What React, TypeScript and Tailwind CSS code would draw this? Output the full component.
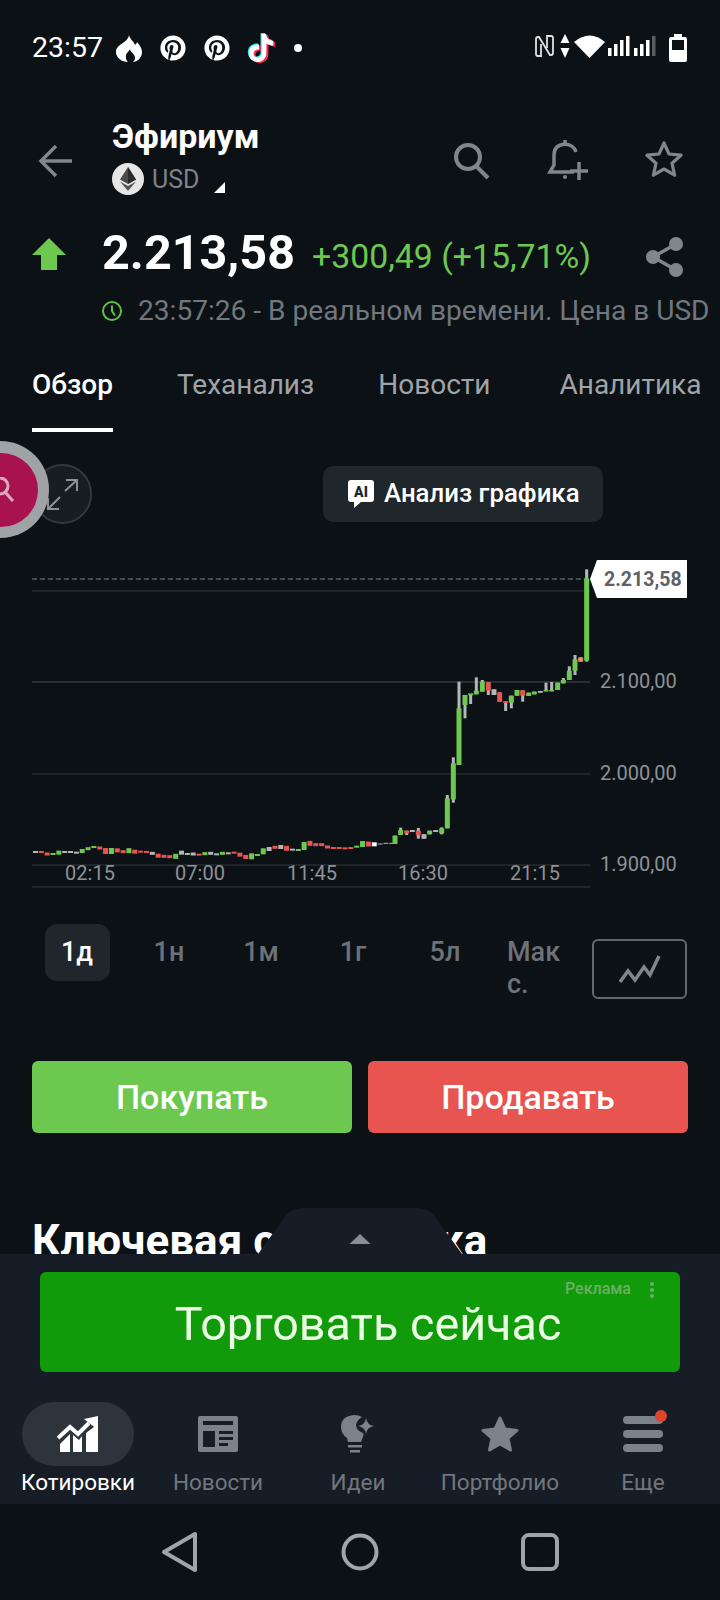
import { FaPinterest } from 'react-icons/fa';
import { SiTiktok } from 'react-icons/si';

const G = '#6cc84f';
const R = '#e8544f';
const W = '#b4b7b9';

// flat part of the chart: y in px * 3 above 780, colour, body height
const flat: [number, string, number][] = [
  [216, W, 2], [216, R, 2], [222, R, 3], [222, G, 2], [218, G, 4], [216, W, 2], [216, W, 2], [218, W, 2],
  [213, G, 4], [206, G, 3], [201, G, 2], [204, R, 3], [213, R, 6], [213, G, 6], [211, R, 4], [215, R, 3],
  [212, G, 5], [215, R, 4], [215, R, 2], [216, R, 2], [220, W, 3], [227, R, 4], [229, R, 3], [230, R, 3],
  [229, G, 5], [218, W, 4], [222, W, 2], [222, W, 3], [224, R, 2], [221, G, 3], [220, W, 3], [223, W, 2],
  [220, G, 3], [220, W, 2], [218, R, 2], [224, R, 4], [231, R, 4], [229, G, 6], [225, G, 2], [214, G, 6],
  [207, W, 4], [202, R, 3], [201, W, 4], [205, R, 5], [209, W, 2], [210, G, 2], [198, G, 8], [190, R, 5],
  [194, R, 3], [194, R, 3], [201, R, 3], [204, R, 2], [204, R, 2], [205, R, 2], [204, R, 2], [200, G, 2],
  [192, G, 6], [192, R, 5], [193, '#ffffff', 4], [192, W, 1], [190, W, 1], [190, W, 1],
];

// rally: x, body top, body bottom, wick top, wick bottom (zoom px, 360/550 origin)
const rally: [number, number, number, string, number, number][] = [
  [105, 857, 882, G, 857, 882], [122, 840, 855, G, 833, 855], [140, 842, 850, R, 842, 855], [157, 840, 846, W, 840, 846],
  [175, 842, 856, R, 834, 866], [192, 853, 866, W, 853, 866], [209, 842, 853, G, 842, 853], [227, 840, 846, W, 840, 846],
  [245, 835, 850, G, 832, 853], [262, 745, 835, G, 735, 835], [280, 640, 748, G, 622, 758], [297, 475, 645, G, 395, 645],
  [315, 435, 465, G, 435, 505], [332, 430, 436, G, 432, 462], [349, 422, 433, G, 382, 433], [367, 395, 425, G, 390, 425],
  [385, 397, 422, R, 397, 435], [402, 418, 435, W, 418, 435], [419, 427, 456, R, 427, 456], [437, 454, 459, R, 454, 483],
  [454, 437, 458, G, 437, 475], [471, 420, 437, G, 420, 437], [488, 421, 437, R, 421, 455], [506, 428, 438, G, 428, 438],
  [523, 425, 433, G, 425, 433], [541, 423, 428, W, 423, 428], [558, 420, 424, G, 398, 424], [575, 420, 424, G, 396, 424],
  [593, 398, 420, G, 398, 420], [610, 390, 400, G, 384, 400], [628, 362, 390, G, 349, 390], [645, 328, 362, G, 315, 375],
  [662, 322, 335, '#e08a6a', 322, 335], [680, 85, 332, G, 58, 335],
];

function Chart() {
  const grid = [591, 682, 774, 865, 887];
  const times: [number, string][] = [[90, '02:15'], [200, '07:00'], [312, '11:45'], [423, '16:30'], [535, '21:15']];
  const prices: [number, string][] = [[681, '2.100,00'], [773, '2.000,00'], [864, '1.900,00']];
  return (
    <svg width="720" height="350" viewBox="0 550 720 350" className="block">
      {grid.map((y) => (
        <line key={y} x1="32" x2="590" y1={y} y2={y} stroke={y === 682 ? '#4a4f53' : '#33383d'} strokeWidth="1" />
      ))}
      <line x1="32" x2="585" y1="579" y2="579" stroke="#7c8185" strokeWidth="1" strokeDasharray="5 3" />
      {flat.map(([py, c, h], i) => (
        <rect key={i} x={33 + i * 5.84} y={780 + py / 3 - h / 2} width="5" height={h} fill={c} />
      ))}
      {rally.map(([px, t, b, c, wt, wb]) => (
        <g key={px}>
          <rect x={360 + px / 3 - 1.5} y={550 + wt / 3} width="3" height={(wb - wt) / 3} fill={W} />
          <rect x={360 + px / 3 - 2.5} y={550 + t / 3} width="5" height={(b - t) / 3} fill={c} />
        </g>
      ))}
      <polygon points="590,579 597,560 687,560 687,598 597,598" fill="#ffffff" />
      <text x="604" y="586" fontFamily="Roboto, sans-serif" fontSize="19.5" fontWeight="700" fill="#5d6166">2.213,58</text>
      {prices.map(([y, t]) => (
        <text key={t} x="600" y={y + 7} fontFamily="Roboto, sans-serif" fontSize="20" fill="#8e9296">{t}</text>
      ))}
      {times.map(([x, t]) => (
        <text key={t} x={x} y="880" textAnchor="middle" fontFamily="Roboto, sans-serif" fontSize="20" fill="#8e9296">{t}</text>
      ))}
    </svg>
  );
}

function StatusBar() {
  return (
    <div className="flex items-center h-[96px] pl-[32px] pr-[32px] text-white">
      <span className="text-[28.5px] leading-none w-[84px]">23:57</span>
      <svg width="26" height="27" viewBox="0 0 26 27" fill="#ffffff">
        <path d="M13 0c1 5 5 6 6 10 1-1 2-2 2-3 3 3 5 7 5 10 0 6-5 10-9 10 2-2 3-4 1-7-2-3-4-4-4-6-1 3-5 4-4 9 0 2 1 3 2 4C6 27 0 23 0 17 0 9 12 8 13 0z" />
      </svg>
      <FaPinterest size={26} className="ml-[18px]" />
      <FaPinterest size={26} className="ml-[18px]" />
      <div className="relative ml-[17px] w-[28px] h-[30px]">
        <SiTiktok size={28} className="absolute left-[-1px] top-[0px] text-[#25f4ee]" />
        <SiTiktok size={28} className="absolute left-[2px] top-[2px] text-[#fe2c55]" />
        <SiTiktok size={28} className="absolute left-[0px] top-[1px] text-white" />
      </div>
      <span className="ml-[19px] w-[8px] h-[8px] rounded-full bg-white" />
      <svg width="146" height="50" viewBox="520 25 146 50" className="ml-auto" fill="#ffffff">
        <path d="M536 56V41q0-2 2-2h1l11 18h1q2 0 2-2V40M536 56q0 2 2 2h3V46M553 40q0-2-2-2h-4v12" fill="none" stroke="#e0e0e0" strokeWidth="1.800" />
        <polygon points="565,36 569.500,45 560.500,45" />
        <polygon points="565,60 569.500,50 560.500,50" />
        <path d="M574 44q16-13 31 0l-15.500 16z" />
        <rect x="608" y="50" width="3.500" height="8" />
        <rect x="614" y="46" width="3.500" height="12" />
        <rect x="620" y="42" width="3.500" height="16" />
        <rect x="626" y="38" width="3.500" height="20" />
        <rect x="634" y="50" width="3.500" height="8" />
        <rect x="640" y="46" width="3.500" height="12" />
        <rect x="646" y="42" width="3.500" height="16" />
        <rect x="652" y="38" width="3.500" height="20" fill="#5a5e62" />
      </svg>
      <svg width="20" height="28" viewBox="0 0 20 28" className="ml-[2px]">
        <path d="M6 0h8v3h3q2 0 2 2v21q0 2-2 2H3q-2 0-2-2V5q0-2 2-2h3z" fill="#ffffff" />
        <rect x="4" y="6" width="12" height="10" fill="#0c1116" />
      </svg>
    </div>
  );
}

function Header() {
  return (
    <div className="flex items-start h-[128px] pt-[19px]">
      <svg width="36" height="36" viewBox="0 0 36 36" className="ml-[38px] mt-[28px]" fill="none" stroke="#80868b" strokeWidth="3.500">
        <path d="M34 18H4M18 3L3 18l15 15" />
      </svg>
      <div className="ml-[38px]">
        <div className="text-[34px] leading-[42px] font-bold text-white">Эфириум</div>
        <div className="flex items-center mt-[6px]">
          <svg width="32" height="32" viewBox="0 0 32 32">
            <circle cx="16" cy="16" r="16" fill="#e6e6e6" />
            <polygon points="16,4 8,16.500 16,21 24,16.500" fill="#4a4a4a" />
            <polygon points="16,4 16,21 24,16.500" fill="#2b2b2b" />
            <polygon points="8,18.500 16,28 24,18.500 16,23" fill="#555555" />
          </svg>
          <span className="ml-[8px] text-[25px] leading-none text-[#7d8388]">USD</span>
          <svg width="11" height="11" viewBox="0 0 11 11" className="ml-[15px] mt-[17px]"><polygon points="11,0 11,11 0,11" fill="#ffffff" /></svg>
        </div>
      </div>
      <svg width="38" height="38" viewBox="0 0 38 38" className="ml-auto mt-[27px]" fill="none" stroke="#80868b" strokeWidth="4">
        <circle cx="15" cy="15" r="12" />
        <path d="M23 24l12 12" />
      </svg>
      <svg width="44" height="44" viewBox="0 0 44 44" className="ml-[55px] mt-[23px]" fill="none" stroke="#80868b" strokeWidth="3.500">
        <path d="M19 2v4M28 34H4l4-7V17q0-10 11-11 9 1 11 8" />
        <circle cx="19" cy="39" r="2" fill="#80868b" stroke="none" />
        <path d="M24 33h18M33 24v18" />
      </svg>
      <svg width="38" height="38" viewBox="0 0 38 38" className="ml-[55px] mr-[37px] mt-[25px]" fill="none" stroke="#80868b" strokeWidth="3.200" strokeLinejoin="round">
        <path d="M19 3l5 11 12 1.200-9 8 2.600 12L19 29l-10.600 6.200L11 23.200l-9-8L14 14z" />
      </svg>
    </div>
  );
}

function PriceBlock() {
  return (
    <>
      <div className="flex items-center h-[66px]">
        <svg width="34" height="32" viewBox="0 0 34 32" className="ml-[32px] mb-[6px]" fill={G}>
          <polygon points="17,0 34,17 25,17 25,32 9,32 9,17 0,17" />
        </svg>
        <span className="ml-[36px] mb-[8px] text-[48.500px] leading-none font-bold text-white">2.213,58</span>
        <span className="ml-[17px] text-[33.800px] leading-none text-[#6cc84f]">+300,49 (+15,71%)</span>
        <svg width="38" height="40" viewBox="0 0 38 40" className="ml-auto mr-[36px]" fill="#80868b">
          <circle cx="30" cy="7" r="7" />
          <circle cx="7" cy="20" r="7" />
          <circle cx="30" cy="33" r="7" />
          <path d="M30 7L7 20l23 13" fill="none" stroke="#80868b" strokeWidth="3.500" />
        </svg>
      </div>
      <div className="flex items-center h-[42px] whitespace-nowrap">
        <svg width="22" height="22" viewBox="0 0 22 22" className="ml-[101px]" fill="none" stroke="#5fc04a" strokeWidth="2">
          <circle cx="11" cy="11" r="9" />
          <path d="M11 5.500V11l3 4.500" />
        </svg>
        <span className="ml-[15px] text-[28.100px] leading-none text-[#71777c]">23:57:26 - В реальном времени. Цена в USD</span>
      </div>
    </>
  );
}

function Tabs() {
  return (
    <div className="flex h-[100px] pl-[32px] pt-[31px] gap-[64px] text-[28px] leading-[44px] whitespace-nowrap text-[#a0a4a8]">
      <div className="relative h-[69px]">
        <span className="font-medium text-white">Обзор</span>
        <div className="absolute left-0 right-0 bottom-0 h-[4px] bg-white" />
      </div>
      <span>Теханализ</span>
      <span>Новости</span>
      <span className="ml-[5px]">Аналитика</span>
    </div>
  );
}

function ChartTools() {
  return (
    <div className="relative flex items-start h-[118px]">
      <div className="mt-[32px] ml-[33px] w-[59px] h-[60px] rounded-full border-2 border-[#33383d] bg-[#181d22] flex items-center justify-center">
        <svg width="34" height="34" viewBox="0 0 34 34" className="ml-[-2px]" fill="none" stroke="#8e9296" strokeWidth="2">
          <path d="M21 3h11v11M32 3L20 14M14 32H3V21M3 32l12-12" />
        </svg>
      </div>
      <div className="ml-[231px] mt-[34px] w-[280px] h-[56px] rounded-[10px] bg-[#1f262c] flex items-center pl-[25px]">
        <svg width="26" height="28" viewBox="0 0 26 28">
          <path d="M3 0h20q3 0 3 3v16q0 3-3 3H13l-7 6v-6H3q-3 0-3-3V3q0-3 3-3z" fill="#ffffff" />
          <text x="13" y="16.500" textAnchor="middle" fontFamily="Roboto, sans-serif" fontSize="14" fontWeight="900" fill="#1f262c">AI</text>
        </svg>
        <span className="ml-[10px] text-[25.800px] leading-none font-medium text-white">Анализ графика</span>
      </div>
      {/* floating magnifier bubble, cut off by the screen edge */}
      <div className="absolute left-[-48px] top-[9px] w-[97px] h-[97px] rounded-full bg-[#a0a3a5] flex items-center justify-center">
        <div className="w-[74px] h-[74px] rounded-full bg-[#a8124f]" />
        <svg width="24" height="26" viewBox="0 0 24 26" className="absolute left-[44px] top-[36px]" fill="none" stroke="#d9a9bd" strokeWidth="3">
          <circle cx="4" cy="9" r="8" />
          <path d="M9 15l8 9" />
        </svg>
      </div>
    </div>
  );
}

function Timeframes() {
  const cells = ['1н', '1м', '1г', '5л'];
  return (
    <div className="flex items-start h-[161px] pt-[24px] pl-[31px] text-[27px] font-medium text-[#6c7277]">
      <div className="w-[92px] flex justify-center">
        <div className="w-[65px] h-[57px] rounded-[12px] bg-[#1f262c] flex items-center justify-center text-white">1д</div>
      </div>
      {cells.map((c) => (
        <div key={c} className="w-[92px] h-[57px] flex items-center justify-center">{c}</div>
      ))}
      <div className="ml-[16px] w-[62px] mt-[12px] leading-[32px]">Мак с.</div>
      <div className="ml-[23px] mt-[15px] w-[95px] h-[60px] rounded-[6px] border-2 border-[#62686d] flex items-center justify-center">
        <svg width="44" height="30" viewBox="0 0 44 30" fill="none" stroke="#80868b" strokeWidth="3.500">
          <path d="M2 28l8-11 7 9 9-13 6 8 9-19" />
        </svg>
      </div>
    </div>
  );
}

function TradeButtons() {
  return (
    <div className="flex gap-[16px] px-[32px]">
      <button className="flex-1 h-[72px] rounded-[6px] bg-[#6cc84f] text-white text-[34px] font-medium">Покупать</button>
      <button className="flex-1 h-[72px] rounded-[6px] bg-[#e8544f] text-white text-[34px] font-medium">Продавать</button>
    </div>
  );
}

function NavIcon({ name }: { name: string }) {
  if (name === 'quotes') {
    return (
      <svg width="42" height="36" viewBox="0 0 42 36" fill="#ffffff">
        <path d="M1 22l12-11 8 7L32 7" fill="none" stroke="#ffffff" strokeWidth="4" />
        <polygon points="27,3 41,0 41,14" />
        <polygon points="3,36 3,28 13,18 13,36" />
        <polygon points="16,36 16,19 22,24 25,20 25,36" />
        <polygon points="29,36 29,17 41,8 41,36" />
      </svg>
    );
  }
  if (name === 'news') {
    return (
      <svg width="40" height="36" viewBox="0 0 40 36">
        <rect width="40" height="36" rx="2" fill="#7d828a" />
        <rect x="5" y="5" width="30" height="4" fill="#171d26" />
        <rect x="5" y="15" width="12" height="16" fill="#171d26" />
        <rect x="21" y="15" width="14" height="3" fill="#171d26" />
        <rect x="21" y="21" width="14" height="3" fill="#171d26" />
        <rect x="21" y="27" width="9" height="3" fill="#171d26" />
      </svg>
    );
  }
  if (name === 'ideas') {
    return (
      <svg width="34" height="38" viewBox="0 0 34 38" fill="#7d828a">
        <path d="M13 0q5 0 8 2-5 3-6 8 0 5 7 8 1 1 0 4l-2 5H7l-1-4Q0 19 0 12 0 1 13 0z" />
        <path d="M25 3q1 7 8 8-7 1-8 8-1-7-8-8 7-1 8-8z" />
        <rect x="7" y="30" width="14" height="2.500" />
        <rect x="9" y="35" width="10" height="2.500" />
      </svg>
    );
  }
  if (name === 'portfolio') {
    return (
      <svg width="38" height="36" viewBox="0 0 38 36" fill="#7d828a" stroke="#7d828a" strokeWidth="3" strokeLinejoin="round">
        <path d="M19 2l5 11 12 1.500-9 8 2.500 11.500L19 28 8.500 34 11 22.500l-9-8L14 13z" />
      </svg>
    );
  }
  return (
    <div className="relative w-[40px] h-[36px] flex flex-col justify-between">
      <div className="h-[8px] rounded-full bg-[#7d828a]" />
      <div className="h-[8px] rounded-full bg-[#7d828a]" />
      <div className="h-[8px] rounded-full bg-[#7d828a]" />
      <div className="absolute right-[-4px] top-[-6px] w-[12px] h-[12px] rounded-full bg-[#e0442f]" />
    </div>
  );
}

function BottomPanel() {
  const items = [
    { id: 'quotes', label: 'Котировки', w: 'w-[140px]', active: true },
    { id: 'news', label: 'Новости', w: 'w-[140px]', active: false },
    { id: 'ideas', label: 'Идеи', w: 'w-[140px]', active: false },
    { id: 'portfolio', label: 'Портфолио', w: 'w-[144px]', active: false },
    { id: 'more', label: 'Еще', w: 'w-[142px]', active: false },
  ];
  return (
    <div className="relative h-[250px] bg-[#171d26]">
      <svg width="204" height="46" viewBox="0 0 204 46" className="absolute left-[258px] top-[-46px]">
        <path d="M0 46L26 10Q33 0 44 0h116Q171 0 178 10L204 46z" fill="#171d26" />
        <polygon points="102,26 112.500,36 91.500,36" fill="#8a8f95" />
      </svg>
      <div className="pt-[18px] px-[40px]">
        <div className="relative h-[100px] rounded-[6px] bg-[#119a09] flex items-center justify-center pt-[4px] pl-[16px]">
          <span className="text-[46.700px] leading-none text-[#eaffe4] blur-[0.5px]">Торговать сейчас</span>
          <span className="absolute left-[525px] top-[8px] text-[16px] leading-[18px] font-medium text-[#6fae68]">Реклама</span>
          <span className="absolute left-[610px] top-[10px] w-[4px] h-[4px] rounded-full bg-[#6fae68] shadow-[0_6px_0_#6fae68,0_12px_0_#6fae68]" />
        </div>
      </div>
      <div className="flex pl-[8px] pt-[30px]">
        {items.map((it) => (
          <div key={it.id} className={`${it.w} flex flex-col items-center`}>
            <div className={`w-[112px] h-[64px] rounded-full flex items-center justify-center ${it.active ? 'bg-[#2e343b]' : ''}`}>
              <NavIcon name={it.id} />
            </div>
            <span className={`mt-[3px] text-[22.500px] leading-[26px] whitespace-nowrap ${it.active ? 'text-white' : 'text-[#71767d]'}`}>{it.label}</span>
          </div>
        ))}
      </div>
    </div>
  );
}

function SystemNav() {
  return (
    <div className="flex items-start h-[96px] pt-[27px] pl-[161px]">
      <svg width="38" height="42" viewBox="0 0 38 42" fill="none" stroke="#a0a4a7" strokeWidth="4" strokeLinejoin="round">
        <path d="M34 3v36L3 21z" />
      </svg>
      <svg width="38" height="38" viewBox="0 0 38 38" className="ml-[142px] mt-[2px]" fill="none" stroke="#a0a4a7" strokeWidth="4">
        <circle cx="19" cy="19" r="16.500" />
      </svg>
      <svg width="38" height="38" viewBox="0 0 38 38" className="ml-[142px] mt-[2px]" fill="none" stroke="#a0a4a7" strokeWidth="4">
        <rect x="2" y="2" width="34" height="34" rx="6" />
      </svg>
    </div>
  );
}

export default function App() {
  return (
    <div className="w-[720px] h-[1600px] overflow-hidden bg-[#0c1116] font-['Roboto',sans-serif]">
      <div className="h-[1254px] overflow-hidden">
        <StatusBar />
        <Header />
        <PriceBlock />
        <Tabs />
        <ChartTools />
        <Chart />
        <Timeframes />
        <TradeButtons />
        <h2 className="mt-[82px] pl-[32px] text-[44px] leading-[52px] font-bold text-white whitespace-nowrap">Ключевая статистика</h2>
      </div>
      <BottomPanel />
      <SystemNav />
    </div>
  );
}
